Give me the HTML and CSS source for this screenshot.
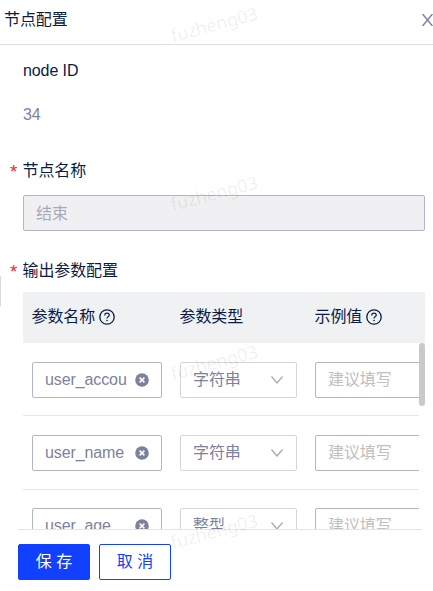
FILE: index.html
```html
<!DOCTYPE html>
<html lang="zh-CN">
<head>
<meta charset="utf-8">
<title>节点配置</title>
<link rel="stylesheet" href="styles.css">
</head>
<body>
<svg class="defs" width="0" height="0" aria-hidden="true">
  <symbol id="help" viewBox="0 0 16 16"><circle cx="8" cy="8" r="7.2" fill="none" stroke="currentColor" stroke-width="1.3"/><path d="M5.7 6.4V6.1Q5.9 4.2 8 4.2T10.3 6.1Q10.3 7.1 9.1 7.7Q8 8.3 8 9.5" fill="none" stroke="currentColor" stroke-width="1.2"/><circle cx="8" cy="11.5" r=".8" fill="currentColor"/></symbol>
  <symbol id="clear" viewBox="0 0 14 14"><circle cx="7" cy="7" r="6.8" fill="currentColor"/><path d="M4.6 4.6L9.4 9.4M9.4 4.6L4.6 9.4" stroke="#fff" stroke-width="1.5"/></symbol>
  <symbol id="down" viewBox="0 0 12 8"><path d="M.5 .5L6 7L11.5 .5" fill="none" stroke="currentColor" stroke-width="1.2"/></symbol>
</svg>
<div class="drawer">
  <header class="head"><span>节点配置</span><svg class="close" viewBox="0 0 11 12"><path d="M.6 0L10.4 12M10.4 0L.6 12" stroke="currentColor" stroke-width="1.5"/></svg></header>
  <main class="body">
    <div class="label id-label">node ID</div>
    <div class="id-value">34</div>
    <div class="label name-label"><i class="star">*</i>节点名称</div>
    <div class="field disabled">结束</div>
    <div class="label out-label"><i class="star">*</i>输出参数配置</div>
    <section class="table">
      <div class="row thead">
        <div class="th">参数名称<svg class="help"><use href="#help"/></svg></div>
        <div class="th">参数类型</div>
        <div class="th">示例值<svg class="help"><use href="#help"/></svg></div>
      </div>
      <div class="scroll">
        <div class="row">
          <div class="field"><span class="value">user_accou</span><svg class="clear"><use href="#clear"/></svg></div>
          <div class="field select"><span>字符串</span><svg class="down"><use href="#down"/></svg></div>
          <div class="field hint">建议填写</div>
        </div>
        <div class="row tall">
          <div class="field"><span class="value">user_name</span><svg class="clear"><use href="#clear"/></svg></div>
          <div class="field select"><span>字符串</span><svg class="down"><use href="#down"/></svg></div>
          <div class="field hint">建议填写</div>
        </div>
        <div class="row last">
          <div class="field"><span class="value">user_age</span><svg class="clear"><use href="#clear"/></svg></div>
          <div class="field select"><span>整型</span><svg class="down"><use href="#down"/></svg></div>
          <div class="field hint">建议填写</div>
        </div>
      </div>
      <div class="thumb"></div>
    </section>
  </main>
  <footer class="foot"><button class="btn primary">保 存</button><button class="btn">取 消</button></footer>
  <div class="handle"></div>
  <div class="marks"><span>fuzheng03</span><span>fuzheng03</span><span>fuzheng03</span><span>fuzheng03</span></div>
</div>
</body>
</html>
```
FILE: styles.css
```css
* { box-sizing: border-box; }
body { margin: 0; background: #fff; font: 16px/24px "Liberation Sans", "Noto Sans CJK SC", sans-serif; letter-spacing: -.1px; color: #091b46; }
.defs { position: absolute; }
svg { display: block; flex: none; }
.drawer { position: relative; width: 433px; height: 591px; overflow: hidden; display: flex; flex-direction: column; }
.head { height: 45px; flex: none; border-bottom: 1px solid #dcdfe6; padding: 0 0 5px 4px; display: flex; align-items: center; justify-content: space-between; }
.close { width: 11px; height: 12px; color: #7d84a3; }
.body { height: 484px; flex: none; overflow: hidden; padding: 0 8px 0 23px; display: flex; flex-direction: column; }
.label { position: relative; height: 24px; flex: none; text-indent: -.5px; }
.id-label { margin-top: 14px; text-indent: 0; }
.id-value { margin-top: 20px; height: 24px; color: #7c829d; }
.name-label { margin-top: 32px; }
.out-label { margin: 28px 0 9px; }
.star { position: absolute; left: -12.5px; top: 1px; color: #f5222d; font-style: normal; font-size: 19px; }
.field { height: 36px; border: 1px solid #b5b3c6; border-radius: 2px; background: #fff; padding: 0 12px; display: flex; align-items: center; justify-content: space-between; color: #7c829d; white-space: nowrap; }
.disabled { margin-top: 12px; width: 402px; flex: none; padding-top: 2px; background: #f0f0f2; color: #a9a9b8; }
.table { position: relative; width: 402px; height: 237px; flex: none; }
.row { width: 430px; height: 73px; padding: 19px 0 0 9px; display: grid; grid-template-columns: 130px 117px 130px; column-gap: 18px; align-content: start; border-bottom: 1px solid #e6e6ee; }
.tall { height: 74px; }
.last { padding-top: 18px; }
.thead { width: 402px; height: 51px; padding: 0 0 2px 9px; background: #f0f1f3; border: 0; align-content: center; overflow: hidden; }
.th { display: flex; align-items: center; white-space: nowrap; text-indent: -.5px; }
.help { width: 16px; height: 16px; margin-left: 3.5px; }
.scroll { width: 396px; height: 186px; overflow: hidden; }
.value { width: 82px; }
.clear { width: 14px; height: 14px; color: #7c829d; }
.select { border-color: #d5d5da; }
.down { width: 12px; height: 8px; color: #a5a5b8; margin-right: 1px; }
.hint { color: #bfbfbf; }
.thumb { position: absolute; right: 0; top: 51px; width: 6px; height: 63px; border-radius: 3px; background: #c9c9c9; }
.foot { height: 57px; flex: none; margin: 0 11px 0 18px; border-top: 1px solid #e5e5e8; padding-top: 14px; display: flex; gap: 9px; }
.btn { width: 72px; height: 36px; padding: 0; border: 1px solid #1240ff; border-radius: 2px; background: #fff; color: #1240ff; font: inherit; letter-spacing: .1px; }
.primary { background: #1240ff; color: #fff; }
.drawer::after { content: ""; height: 1px; flex: none; margin-top: -1px; background: #fafafa; }
.handle { position: absolute; left: 0; top: 276px; width: 1px; height: 30px; background: #d9d9e0; }
.marks { position: absolute; left: 165px; top: 10px; display: flex; flex-direction: column; gap: 141px; pointer-events: none; }
.marks span { width: 98px; height: 28px; text-align: center; font: 18px/28px "Noto Sans", sans-serif; letter-spacing: -.1px; color: rgba(0, 0, 0, .07); transform: rotate(-15deg); }
```
